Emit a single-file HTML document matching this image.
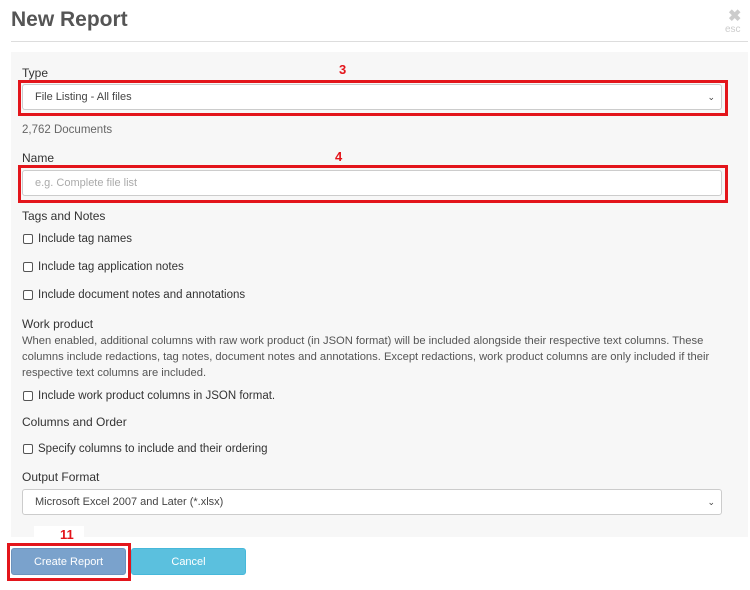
<!DOCTYPE html>
<html><head><style>
*{box-sizing:border-box;margin:0;padding:0}
body{width:750px;height:590px;background:#fff;font-family:"Liberation Sans",sans-serif;color:#333;position:relative;overflow:hidden}
.a{position:absolute;white-space:nowrap}
.lab{font-size:12px;color:#333}
.t{font-size:11.5px;color:#333}
.cb{position:absolute;width:10px;height:10px;border:1px solid #555;border-radius:2px;background:#fff}
.sel{position:absolute;background:#fff;border:1px solid #ccc;border-radius:3px;font-size:11px;color:#444;padding-left:12px;display:flex;align-items:center}
.red{position:absolute;border:3px solid #e3151b}
.num{position:absolute;color:#e3151b;font-weight:bold;font-size:13px}
</style></head><body>
<div class="a" style="left:11px;top:8px;font-size:21px;font-weight:bold;color:#555">New Report</div>
<div class="a" style="left:728px;top:6px;font-size:16px;font-weight:bold;color:#ccc">✖</div>
<div class="a" style="left:725px;top:24px;font-size:10px;color:#ccc">esc</div>
<div class="a" style="left:11px;top:41px;width:737px;height:1px;background:#ddd"></div>
<div class="a" style="left:11px;top:52px;width:737px;height:485px;background:#f7f7f7"></div>

<div class="a lab" style="left:22px;top:66px">Type</div>
<div class="num" style="left:339px;top:62px">3</div>
<div class="red" style="left:18px;top:80px;width:710px;height:36px"></div>
<div class="sel" style="left:22px;top:84px;width:700px;height:26px">File Listing - All files<span style="position:absolute;right:6px;font-size:9px">&#8964;</span></div>
<div class="a t" style="left:22px;top:124px;color:#666">2,762 Documents</div>

<div class="a lab" style="left:22px;top:151px">Name</div>
<div class="num" style="left:335px;top:149px">4</div>
<div class="red" style="left:18px;top:165px;width:710px;height:38px"></div>
<div class="sel" style="left:22px;top:170px;width:700px;height:26px;color:#aaa">e.g. Complete file list</div>

<div class="a lab" style="left:22px;top:209px">Tags and Notes</div>
<div class="cb" style="left:23px;top:234px"></div><div class="a t" style="left:38px;top:233px">Include tag names</div>
<div class="cb" style="left:23px;top:262px"></div><div class="a t" style="left:38px;top:261px">Include tag application notes</div>
<div class="cb" style="left:23px;top:290px"></div><div class="a t" style="left:38px;top:289px">Include document notes and annotations</div>

<div class="a lab" style="left:22px;top:317px">Work product</div>
<div class="a t" style="left:22px;top:333px;line-height:16px;white-space:normal;width:705px;color:#555;font-size:11.2px">When enabled, additional columns with raw work product (in JSON format) will be included alongside their respective text columns. These columns include redactions, tag notes, document notes and annotations. Except redactions, work product columns are only included if their respective text columns are included.</div>
<div class="cb" style="left:23px;top:391px"></div><div class="a t" style="left:38px;top:390px">Include work product columns in JSON format.</div>

<div class="a lab" style="left:22px;top:415px">Columns and Order</div>
<div class="cb" style="left:23px;top:444px"></div><div class="a t" style="left:38px;top:443px">Specify columns to include and their ordering</div>

<div class="a lab" style="left:22px;top:470px">Output Format</div>
<div class="sel" style="left:22px;top:489px;width:700px;height:26px">Microsoft Excel 2007 and Later (*.xlsx)<span style="position:absolute;right:6px;font-size:9px">&#8964;</span></div>

<div class="a" style="left:34px;top:526px;width:50px;height:11px;background:#fff"></div>
<div class="num" style="left:60px;top:527px">11</div>
<div class="red" style="left:7px;top:543px;width:124px;height:38px"></div>
<div class="a" style="left:11px;top:548px;width:115px;height:27px;background:#7aa2cc;border:1px solid #6c93bd;border-radius:3px;color:#fff;font-size:11px;display:flex;align-items:center;justify-content:center">Create Report</div>
<div class="a" style="left:131px;top:548px;width:115px;height:27px;background:#5bc0de;border:1px solid #46b8da;border-radius:3px;color:#fff;font-size:11px;display:flex;align-items:center;justify-content:center">Cancel</div>
</body></html>
